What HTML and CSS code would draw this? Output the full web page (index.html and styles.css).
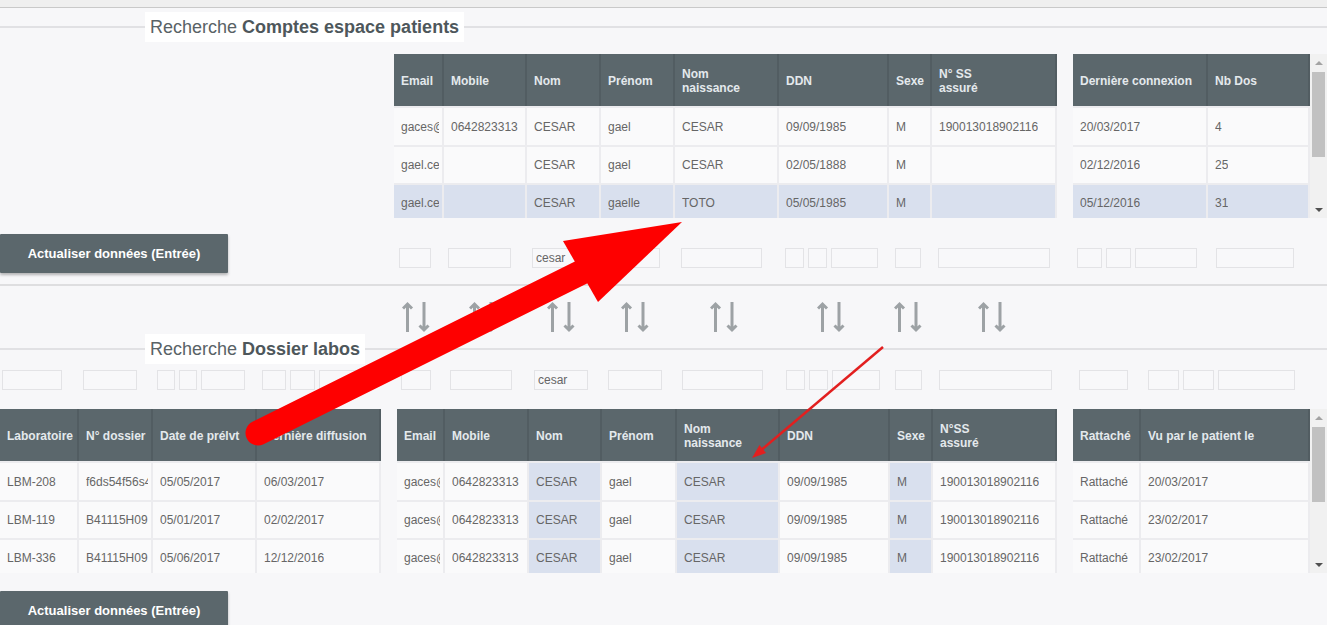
FILE: index.html
```html
<!DOCTYPE html>
<html lang="fr">
<head>
<meta charset="utf-8">
<title>Recherche comptes et dossiers</title>
<link rel="stylesheet" href="styles.css">
</head>
<body>
<div class="topbar"></div>

<section class="block block-top">
  <div class="legend"><span class="legend-line legend-line--lead"></span><h2 class="legend-title">Recherche <b>Comptes espace patients</b></h2><span class="legend-line"></span></div>

  <div class="tables tables--top">
    <div class="grid g-patients">
      <div class="th">Email</div><div class="th">Mobile</div><div class="th">Nom</div><div class="th">Prénom</div><div class="th">Nom<br>naissance</div><div class="th">DDN</div><div class="th">Sexe</div><div class="th">N° SS<br>assuré</div>
      <div class="td"><span>gaces@gmail.com</span></div><div class="td"><span>0642823313</span></div><div class="td"><span>CESAR</span></div><div class="td"><span>gael</span></div><div class="td"><span>CESAR</span></div><div class="td"><span>09/09/1985</span></div><div class="td"><span>M</span></div><div class="td"><span>190013018902116</span></div>
      <div class="td"><span>gael.cesar@gmail.com</span></div><div class="td"><span></span></div><div class="td"><span>CESAR</span></div><div class="td"><span>gael</span></div><div class="td"><span>CESAR</span></div><div class="td"><span>02/05/1888</span></div><div class="td"><span>M</span></div><div class="td"><span></span></div>
      <div class="td hl"><span>gael.cesar@orange.fr</span></div><div class="td hl"><span></span></div><div class="td hl"><span>CESAR</span></div><div class="td hl"><span>gaelle</span></div><div class="td hl"><span>TOTO</span></div><div class="td hl"><span>05/05/1985</span></div><div class="td hl"><span>M</span></div><div class="td hl"><span></span></div>
    </div>
    <div class="grid g-connexion">
      <div class="th">Dernière connexion</div><div class="th">Nb Dos</div>
      <div class="td"><span>20/03/2017</span></div><div class="td"><span>4</span></div>
      <div class="td"><span>02/12/2016</span></div><div class="td"><span>25</span></div>
      <div class="td hl"><span>05/12/2016</span></div><div class="td hl"><span>31</span></div>
    </div>
    <div class="vscroll">
      <div class="vscroll-btn vscroll-btn--up"></div>
      <div class="vscroll-thumb"></div>
      <div class="vscroll-space"></div>
      <div class="vscroll-btn vscroll-btn--down"></div>
    </div>
  </div>

  <div class="action-row">
    <button class="btn" type="button">Actualiser données (Entrée)</button>
    <div class="filters filters--top">
      <div class="fc"><input class="flt w32" type="text"></div>
      <div class="fc fc-4"><input class="flt w63" type="text"></div>
      <div class="fc"><input class="flt w56" type="text" value="cesar"></div>
      <div class="fc fc-6"><input class="flt w53" type="text"></div>
      <div class="fc fc-6"><input class="flt w81" type="text"></div>
      <div class="fc fc-6"><input class="flt w19" type="text"><input class="flt w19" type="text"><input class="flt w47" type="text"></div>
      <div class="fc fc-6"><input class="flt w26" type="text"></div>
      <div class="fc fc-6"><input class="flt w112" type="text"></div>
      <div class="fc fc-4"><input class="flt w25" type="text"><input class="flt w25" type="text"><input class="flt w62" type="text"></div>
      <div class="fc fc-8"><input class="flt w78" type="text"></div>
    </div>
  </div>
</section>

<div class="separator"></div>

<div class="sort-row">
  <svg class="sort" viewBox="0 0 30 32"><path d="M5.5 31V3M1 7.5L5.5 3L10 7.5M22 1V29M17.5 24.5L22 29L26.5 24.5"/></svg>
  <svg class="sort" viewBox="0 0 30 32"><path d="M5.5 31V3M1 7.5L5.5 3L10 7.5M22 1V29M17.5 24.5L22 29L26.5 24.5"/></svg>
  <svg class="sort" viewBox="0 0 30 32"><path d="M5.5 31V3M1 7.5L5.5 3L10 7.5M22 1V29M17.5 24.5L22 29L26.5 24.5"/></svg>
  <svg class="sort" viewBox="0 0 30 32"><path d="M5.5 31V3M1 7.5L5.5 3L10 7.5M22 1V29M17.5 24.5L22 29L26.5 24.5"/></svg>
  <svg class="sort" viewBox="0 0 30 32"><path d="M5.5 31V3M1 7.5L5.5 3L10 7.5M22 1V29M17.5 24.5L22 29L26.5 24.5"/></svg>
  <svg class="sort" viewBox="0 0 30 32"><path d="M5.5 31V3M1 7.5L5.5 3L10 7.5M22 1V29M17.5 24.5L22 29L26.5 24.5"/></svg>
  <svg class="sort" viewBox="0 0 30 32"><path d="M5.5 31V3M1 7.5L5.5 3L10 7.5M22 1V29M17.5 24.5L22 29L26.5 24.5"/></svg>
  <svg class="sort" viewBox="0 0 30 32"><path d="M5.5 31V3M1 7.5L5.5 3L10 7.5M22 1V29M17.5 24.5L22 29L26.5 24.5"/></svg>
</div>

<section class="block block-bottom">
  <div class="legend"><span class="legend-line legend-line--lead"></span><h2 class="legend-title">Recherche <b>Dossier labos</b></h2><span class="legend-line"></span></div>

  <div class="filters filters--bottom">
    <div class="fc fc-2"><input class="flt w60" type="text"></div>
    <div class="fc fc-4"><input class="flt w54" type="text"></div>
    <div class="fc fc-4"><input class="flt w18" type="text"><input class="flt w18" type="text"><input class="flt w44" type="text"></div>
    <div class="fc"><input class="flt w24" type="text"><input class="flt w25" type="text"><input class="flt w48" type="text"></div>
    <div class="fc fc-4"><input class="flt w30" type="text"></div>
    <div class="fc"><input class="flt w62" type="text"></div>
    <div class="fc"><input class="flt w54" type="text" value="cesar"></div>
    <div class="fc fc-6"><input class="flt w54" type="text"></div>
    <div class="fc"><input class="flt w81" type="text"></div>
    <div class="fc fc-6"><input class="flt w19" type="text"><input class="flt w19" type="text"><input class="flt w48" type="text"></div>
    <div class="fc"><input class="flt w27" type="text"></div>
    <div class="fc fc-6"><input class="flt w113" type="text"></div>
    <div class="fc fc-6"><input class="flt w49" type="text"></div>
    <div class="fc fc-7"><input class="flt w31" type="text"><input class="flt w31" type="text"><input class="flt w77" type="text"></div>
  </div>

  <div class="tables tables--bottom">
    <div class="grid g-labos">
      <div class="th">Laboratoire</div><div class="th">N° dossier</div><div class="th">Date de prélvt</div><div class="th">Dernière diffusion</div>
      <div class="td"><span>LBM-208</span></div><div class="td"><span>f6ds54f56s4d5</span></div><div class="td"><span>05/05/2017</span></div><div class="td"><span>06/03/2017</span></div>
      <div class="td"><span>LBM-119</span></div><div class="td"><span>B41115H0912</span></div><div class="td"><span>05/01/2017</span></div><div class="td"><span>02/02/2017</span></div>
      <div class="td"><span>LBM-336</span></div><div class="td"><span>B41115H0913</span></div><div class="td"><span>05/06/2017</span></div><div class="td"><span>12/12/2016</span></div>
    </div>
    <div class="grid g-dossiers">
      <div class="th">Email</div><div class="th">Mobile</div><div class="th">Nom</div><div class="th">Prénom</div><div class="th">Nom<br>naissance</div><div class="th">DDN</div><div class="th">Sexe</div><div class="th">N°SS<br>assuré</div>
      <div class="td"><span>gaces@gmail.com</span></div><div class="td"><span>0642823313</span></div><div class="td hl"><span>CESAR</span></div><div class="td"><span>gael</span></div><div class="td hl"><span>CESAR</span></div><div class="td"><span>09/09/1985</span></div><div class="td hl"><span>M</span></div><div class="td"><span>190013018902116</span></div>
      <div class="td"><span>gaces@gmail.com</span></div><div class="td"><span>0642823313</span></div><div class="td hl"><span>CESAR</span></div><div class="td"><span>gael</span></div><div class="td hl"><span>CESAR</span></div><div class="td"><span>09/09/1985</span></div><div class="td hl"><span>M</span></div><div class="td"><span>190013018902116</span></div>
      <div class="td"><span>gaces@gmail.com</span></div><div class="td"><span>0642823313</span></div><div class="td hl"><span>CESAR</span></div><div class="td"><span>gael</span></div><div class="td hl"><span>CESAR</span></div><div class="td"><span>09/09/1985</span></div><div class="td hl"><span>M</span></div><div class="td"><span>190013018902116</span></div>
    </div>
    <div class="grid g-rattache">
      <div class="th">Rattaché</div><div class="th">Vu par le patient le</div>
      <div class="td"><span>Rattaché</span></div><div class="td"><span>20/03/2017</span></div>
      <div class="td"><span>Rattaché</span></div><div class="td"><span>23/02/2017</span></div>
      <div class="td"><span>Rattaché</span></div><div class="td"><span>23/02/2017</span></div>
    </div>
    <div class="vscroll vscroll--bottom">
      <div class="vscroll-btn vscroll-btn--up"></div>
      <div class="vscroll-thumb"></div>
      <div class="vscroll-space"></div>
      <div class="vscroll-btn vscroll-btn--down"></div>
    </div>
  </div>

  <button class="btn btn--bottom" type="button">Actualiser données (Entrée)</button>
</section>

<svg class="annot" viewBox="0 0 1327 625" aria-hidden="true">
  <line x1="258" y1="433" x2="588" y2="269" stroke="#fe0000" stroke-width="25" stroke-linecap="round"/>
  <polygon points="563,241 682,222 598,302" fill="#fe0000"/>
  <line x1="883" y1="347" x2="760" y2="451" stroke="#e21f1f" stroke-width="2.5"/>
  <polygon points="752,458 766,453 759.5,445" fill="#e21f1f"/>
</svg>
</body>
</html>
```

FILE: styles.css
```css
html, body {
  margin: 0;
  height: 100%;
  overflow: hidden;
}

body {
  position: relative;
  background: #f7f7f9;
  font-family: "Liberation Sans", Arial, sans-serif;
  font-size: 12px;
  color: #666;
}

.topbar {
  height: 7px;
  background: #efefef;
  border-bottom: 1px solid #c9c9c9;
}

/* legends */
.legend {
  display: flex;
  align-items: center;
  height: 30px;
}
.legend-line {
  flex: 1;
  height: 2px;
  background: #e1e1e4;
}
.legend-line--lead {
  flex: 0 0 145px;
}
.legend-title {
  margin: 0;
  padding: 0 5px;
  height: 30px;
  line-height: 30px;
  background: #fff;
  font-size: 18px;
  font-weight: normal;
  color: #596266;
  white-space: nowrap;
}
.legend-title b {
  color: #4e575b;
}
.block-top .legend {
  margin-top: 4px;
}
.block-bottom .legend {
  margin-top: 1px;
}

/* tables */
.tables {
  display: flex;
  align-items: flex-start;
  height: 164px;
  overflow: hidden;
}
.tables--top {
  margin-top: 12px;
  padding-left: 394px;
}
.tables--bottom {
  margin-top: 19px;
}
.grid {
  display: grid;
  grid-template-rows: 52px 39px 38px 38px;
  flex: none;
}
.grid + .grid {
  margin-left: 16px;
}
.g-patients { grid-template-columns: 50px 83px 74px 74px 104px 110px 43px 125px; }
.g-connexion { grid-template-columns: 135px 102px; }
.g-labos { grid-template-columns: 79px 74px 104px 124px; }
.g-dossiers { grid-template-columns: 48px 84px 73px 75px 103px 110px 43px 124px; }
.g-rattache { grid-template-columns: 68px 169px; }

.th,
.td {
  display: flex;
  align-items: center;
  padding: 0 3px 0 7px;
  min-width: 0;
  white-space: nowrap;
}
.th {
  padding-top: 1px;
  background: #5b676c;
  color: #e4e9ec;
  font-weight: bold;
  line-height: 14px;
  border-right: 2px solid #525d62;
}
.td {
  background: #fafafb;
  border-right: 2px solid #ececef;
  border-top: 2px solid #ececef;
}
.td > span {
  display: block;
  min-width: 0;
  overflow: hidden;
}
.td.hl {
  background: #d9e0ee;
}

/* fake scrollbar */
.vscroll {
  margin-left: auto;
  width: 17px;
  height: 164px;
  background: #f1f1f1;
  display: flex;
  flex-direction: column;
  align-items: center;
  flex: none;
}
.vscroll-btn {
  width: 17px;
  height: 17px;
  display: flex;
  align-items: center;
  justify-content: center;
}
.vscroll-btn::before {
  content: "";
  border-left: 4px solid transparent;
  border-right: 4px solid transparent;
}
.vscroll-btn--up::before {
  border-bottom: 4px solid #a3a3a3;
}
.vscroll-btn--down::before {
  border-top: 4px solid #505050;
}
.vscroll-thumb {
  width: 13px;
  height: 85px;
  margin-top: 1px;
  background: #c1c1c1;
}
.vscroll--bottom .vscroll-thumb {
  height: 75px;
}
.vscroll-space {
  flex: 1;
}

/* action row & button */
.action-row {
  display: flex;
  align-items: flex-start;
  margin-top: 16px;
}
.btn {
  flex: none;
  width: 228px;
  height: 39px;
  padding: 0;
  border: 0;
  border-radius: 1px;
  background: #5b676c;
  color: #fff;
  font: bold 13px "Liberation Sans", Arial, sans-serif;
  box-shadow: 0 2px 3px rgba(0, 0, 0, 0.28);
  cursor: pointer;
}
.btn--bottom {
  display: block;
  margin-top: 18px;
}

/* filters */
.filters {
  display: grid;
  height: 20px;
}
.filters--top {
  margin-left: 166px;
  margin-top: 14px;
  grid-template-columns: 50px 83px 74px 74px 104px 110px 43px 141px 135px 102px;
}
.filters--bottom {
  margin-top: 6px;
  grid-template-columns: 79px 74px 104px 140px 48px 84px 73px 75px 103px 110px 43px 140px 68px 169px;
}
.fc {
  display: flex;
  gap: 4px;
  padding-left: 5px;
}
.fc-2 { padding-left: 2px; }
.fc-4 { padding-left: 4px; }
.fc-6 { padding-left: 6px; }
.fc-7 { padding-left: 7px; }
.fc-8 { padding-left: 8px; }

.flt {
  box-sizing: border-box;
  flex: none;
  height: 20px;
  margin: 0;
  padding: 0 3px;
  border: 1px solid #e3e3e6;
  border-radius: 0;
  background: #f8f8fa;
  font: 12px "Liberation Sans", Arial, sans-serif;
  color: #666;
  outline: none;
}
.w18 { width: 18px; }
.w19 { width: 19px; }
.w24 { width: 24px; }
.w25 { width: 25px; }
.w26 { width: 26px; }
.w27 { width: 27px; }
.w30 { width: 30px; }
.w31 { width: 31px; }
.w32 { width: 32px; }
.w44 { width: 44px; }
.w47 { width: 47px; }
.w48 { width: 48px; }
.w49 { width: 49px; }
.w53 { width: 53px; }
.w54 { width: 54px; }
.w56 { width: 56px; }
.w60 { width: 60px; }
.w62 { width: 62px; }
.w63 { width: 63px; }
.w77 { width: 77px; }
.w78 { width: 78px; }
.w81 { width: 81px; }
.w112 { width: 112px; }
.w113 { width: 113px; }

/* separator & sort icons */
.separator {
  height: 2px;
  margin-top: 11px;
  background: #dedee0;
}
.sort-row {
  display: grid;
  grid-template-columns: 50px 83px 74px 74px 104px 110px 43px 125px;
  justify-items: center;
  height: 32px;
  margin-top: 15px;
  margin-left: 392px;
}
.sort {
  width: 30px;
  height: 32px;
  fill: none;
  stroke: #9da2a5;
  stroke-width: 3;
}

/* annotation overlay */
.annot {
  position: absolute;
  top: 0;
  left: 0;
  width: 1327px;
  height: 625px;
  pointer-events: none;
}
```
